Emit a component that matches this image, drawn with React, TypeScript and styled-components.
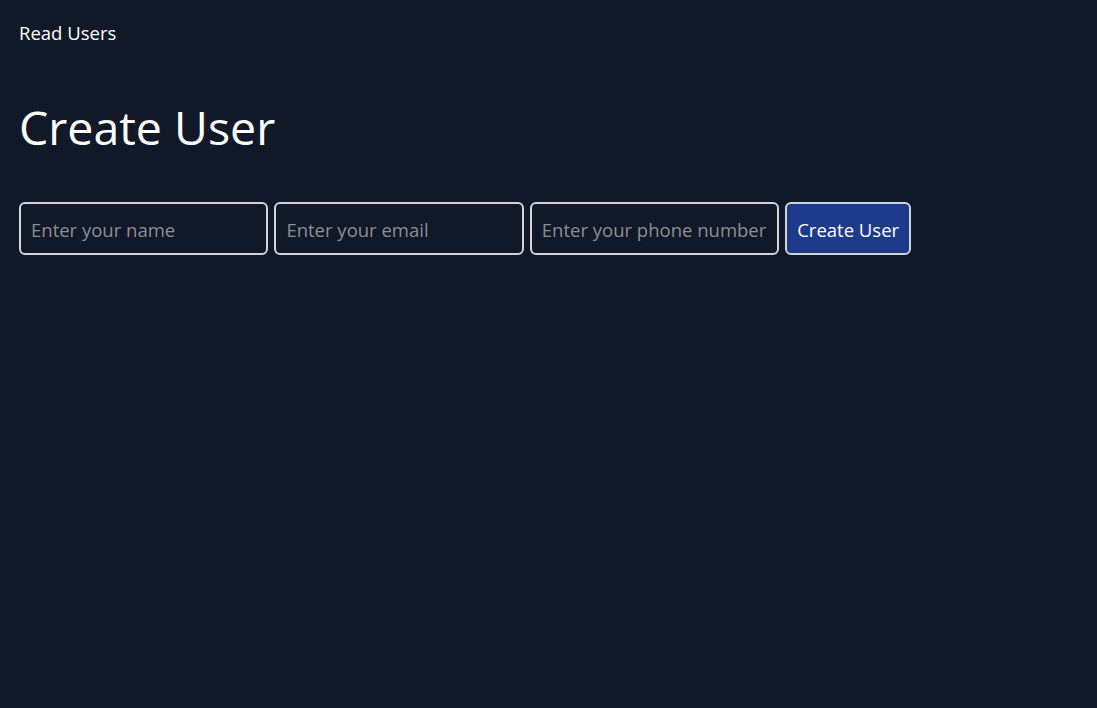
import React from "react";
import styled, { createGlobalStyle } from "styled-components";

const Global = createGlobalStyle`
  html, body { margin: 0; padding: 0; background: #111827; }
  body { font-family: "Open Sans", "Noto Sans", sans-serif; color: #ffffff; }
  * { box-sizing: border-box; }
`;

const Page = styled.div`
  min-height: 708px;
  padding: 20px 19px;
  background: #111827;
`;

const Nav = styled.nav`
  display: flex;
  gap: 16px;
`;

const NavLink = styled.a`
  color: #ffffff;
  font-size: 18.5px;
  line-height: 26px;
  text-decoration: none;
  cursor: pointer;
`;

const Title = styled.h1`
  margin: 49px 0 43px;
  font-size: 46.5px;
  font-weight: 400;
  line-height: 64px;
  color: #ffffff;
`;

const Form = styled.form`
  display: flex;
  gap: 6px;
  align-items: stretch;
`;

const Field = styled.input`
  width: 249.4px;
  height: 53px;
  padding: 1px 10px 0;
  border: 2px solid #d1d5db;
  border-radius: 6px;
  background: #111827;
  color: #ffffff;
  font-family: inherit;
  font-size: 18.5px;
  outline: none;
  &::placeholder { color: #8b8f96; }
`;

const Submit = styled.button`
  height: 53px;
  padding: 1px 10px 0;
  border: 2px solid #d1d5db;
  border-radius: 6px;
  background: #1e3a8a;
  color: #ffffff;
  font-family: inherit;
  font-size: 18.5px;
  cursor: pointer;
`;

export default function App() {
  return (
    <Page>
      <Global />
      <Nav>
        <NavLink>Read Users</NavLink>
      </Nav>
      <Title>Create User</Title>
      <Form onSubmit={(e) => e.preventDefault()}>
        <Field type="text" placeholder="Enter your name" />
        <Field type="email" placeholder="Enter your email" />
        <Field type="tel" placeholder="Enter your phone number" />
        <Submit type="submit">Create User</Submit>
      </Form>
    </Page>
  );
}
